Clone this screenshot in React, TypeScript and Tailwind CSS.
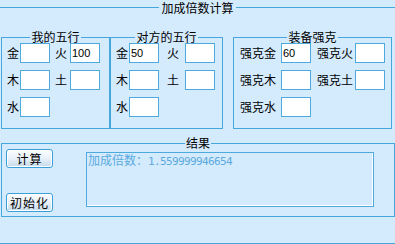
import React from "react";

const BORDER = "border-[#45a7dc]";

function Box({ value }: { value?: string }) {
  return (
    <input
      readOnly
      defaultValue={value ?? ""}
      className="w-[30px] h-[20px] shrink-0 border border-[#4ea9dc] bg-white pl-[1px] text-[11px] leading-[18px] font-['Liberation_Sans',sans-serif] text-black outline-none"
    />
  );
}

function Btn({ children }: { children: React.ReactNode }) {
  return (
    <button className="w-[47px] h-[19px] rounded-[3px] border border-[#3a9fd8] bg-gradient-to-b from-[#fbfdff] via-[#e8f1f9] to-[#c6d9ea] shadow-[inset_1px_1px_0_#ffffff,inset_-1px_-1px_0_#ffffff] text-[12px] leading-[17px] text-black tracking-[1px]">
      {children}
    </button>
  );
}

function Legend({ children }: { children: React.ReactNode }) {
  return (
    <legend className="mx-auto px-[1px] leading-[13px]">
      <span className="relative -top-[1px]">{children}</span>
    </legend>
  );
}

export default function App() {
  return (
    <div className="w-[395px] h-[244px] bg-[#d4eafd] text-[12px] text-black font-['Noto_Sans_CJK_SC',sans-serif] overflow-hidden">
      <fieldset className={`h-[244px] min-w-0 border-t border-b ${BORDER}`}>
        <legend className="mx-auto px-[2px] leading-[15px]">加成倍数计算</legend>

        <div className="flex pl-[1px] mt-[16px]">
          {/* 我的五行 */}
          <fieldset className={`w-[109px] h-[98px] min-w-0 border ${BORDER}`}>
            <Legend>我的五行</Legend>
            <div className="flex flex-col gap-[7px] -mt-px">
              <div className="flex items-center pl-[5px]">
                <span className="w-[13px]">金</span>
                <Box />
                <span className="w-[20px] pl-[5px]">火</span>
                <Box value="100" />
              </div>
              <div className="flex items-center pl-[5px]">
                <span className="w-[13px]">木</span>
                <Box />
                <span className="w-[20px] pl-[5px]">土</span>
                <Box />
              </div>
              <div className="flex items-center pl-[5px]">
                <span className="w-[13px]">水</span>
                <Box />
              </div>
            </div>
          </fieldset>

          {/* 对方的五行 */}
          <fieldset className={`w-[113px] h-[98px] min-w-0 border ${BORDER}`}>
            <Legend>对方的五行</Legend>
            <div className="flex flex-col gap-[7px] -mt-px">
              <div className="flex items-center pl-[5px]">
                <span className="w-[13px]">金</span>
                <Box value="50" />
                <span className="w-[26px] pl-[8px]">火</span>
                <Box />
              </div>
              <div className="flex items-center pl-[5px]">
                <span className="w-[13px]">木</span>
                <Box />
                <span className="w-[26px] pl-[8px]">土</span>
                <Box />
              </div>
              <div className="flex items-center pl-[5px]">
                <span className="w-[13px]">水</span>
                <Box />
              </div>
            </div>
          </fieldset>

          {/* 装备强克 */}
          <fieldset className={`ml-[10px] w-[159px] h-[98px] min-w-0 border ${BORDER}`}>
            <Legend>装备强克</Legend>
            <div className="flex flex-col gap-[7px] -mt-px">
              <div className="flex items-center pl-[6px]">
                <span className="w-[41px]">强克金</span>
                <Box value="60" />
                <span className="w-[44px] pl-[6px]">强克火</span>
                <Box />
              </div>
              <div className="flex items-center pl-[6px]">
                <span className="w-[41px]">强克木</span>
                <Box />
                <span className="w-[44px] pl-[6px]">强克土</span>
                <Box />
              </div>
              <div className="flex items-center pl-[6px]">
                <span className="w-[41px]">强克水</span>
                <Box />
              </div>
            </div>
          </fieldset>
        </div>

        {/* 结果 */}
        <div className="pl-[1px] mt-[8px]">
          <fieldset className={`w-[394px] h-[80px] min-w-0 border ${BORDER}`}>
            <Legend>结果</Legend>
            <div className="flex items-start -mt-px">
              <div className="ml-[4px] h-[63px] flex flex-col justify-between">
                <Btn>计算</Btn>
                <Btn>初始化</Btn>
              </div>
              <div className="ml-[33px] mt-[3px] w-[288px] h-[55px] border border-[#4ea9dc]">
                <div className="h-full w-full border-r border-b border-white pl-px text-[#5aaade] leading-[14px]">
                  <span className="font-['Noto_Sans_CJK_SC',sans-serif] text-[12px]">加成倍数：</span>
                  <span className="font-['DejaVu_Sans_Mono',monospace] text-[11px] tracking-[-0.62px]">1.559999946654</span>
                </div>
              </div>
            </div>
          </fieldset>
        </div>
      </fieldset>
    </div>
  );
}
